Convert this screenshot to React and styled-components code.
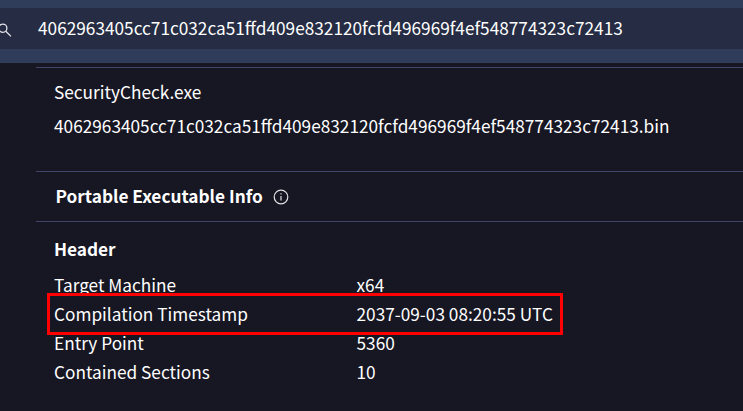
import React from 'react';
import styled, { createGlobalStyle } from 'styled-components';

const GlobalStyle = createGlobalStyle`
  * { box-sizing: border-box; }
  body {
    margin: 0;
    overflow: hidden;
    background: #171623;
    color: #fff;
    font-family: "Noto Sans CJK SC", "Noto Sans", sans-serif;
    font-size: 17.24px;
    line-height: 29px;
  }
`;

const Page = styled.main`
  height: 411px;
  overflow: hidden;
  white-space: nowrap;
`;

const TopBar = styled.header`
  height: 63px;
  padding: 8px 0 14px;
  background: #2f3d5b;
`;

const SearchField = styled.div`
  display: flex;
  align-items: center;
  height: 41px;
  padding-bottom: 2px;
  background: #252c43;
`;

const SearchIcon = styled.svg`
  flex: none;
  width: 16px;
  height: 16px;
  margin: 5px 26px 0 -4px;
`;

const Content = styled.div`
  margin-left: 36px;
  padding-top: 4px;
`;

const Names = styled.section`
  height: 104px;
  padding: 9px 0 0 18px;
  border-top: 1px solid #40466a;
`;

const Name = styled.div`
  margin-bottom: 5px;
`;

const SectionTitle = styled.h2`
  display: flex;
  align-items: center;
  height: 51px;
  margin: 0;
  padding: 0 0 2px 19.5px;
  border: solid #40466a;
  border-width: 1px 0;
  font-size: inherit;
  font-weight: 700;
`;

const InfoIcon = styled.svg`
  flex: none;
  width: 16px;
  height: 16px;
  margin: 2px 0 0 10.5px;
`;

const Details = styled.section`
  padding: 12px 0 0 18px;
`;

const Subtitle = styled.h3`
  margin: 0 0 7px;
  font-size: inherit;
  font-weight: 700;
`;

const Row = styled.div`
  position: relative;
  display: grid;
  grid-template-columns: 302.5px 1fr;
`;

const Highlight = styled.div`
  position: absolute;
  top: -6px;
  left: -7px;
  width: 516px;
  height: 42px;
  border: 3px solid #fe0000;
`;

const HASH = '4062963405cc71c032ca51ffd409e832120fcfd496969f4ef548774323c72413';

const rows = [
  { label: 'Target Machine', value: 'x64' },
  { label: 'Compilation Timestamp', value: '2037-09-03 08:20:55 UTC', marked: true },
  { label: 'Entry Point', value: '5360' },
  { label: 'Contained Sections', value: '10' },
];

export default function App() {
  return (
    <Page>
      <GlobalStyle />
      <TopBar>
        <SearchField>
          <SearchIcon viewBox="0 0 16 16" fill="none" stroke="#e4e6ea" strokeWidth="1.3">
            <circle cx="6.8" cy="6.2" r="4.1" />
            <path d="M9.8 9.2 15 14.4" />
          </SearchIcon>
          <span>{HASH}</span>
        </SearchField>
      </TopBar>
      <Content>
        <Names>
          <Name>SecurityCheck.exe</Name>
          <Name>{HASH}.bin</Name>
        </Names>
        <SectionTitle>
          <span>Portable Executable Info</span>
          <InfoIcon viewBox="0 0 16 16" fill="none" stroke="#e2e2e6" strokeWidth="1.2">
            <circle cx="8" cy="8" r="6.8" />
            <path d="M8 7v4.5M8 4.3v1.3" />
          </InfoIcon>
        </SectionTitle>
        <Details>
          <Subtitle>Header</Subtitle>
          {rows.map((r) => (
            <Row key={r.label}>
              <span>{r.label}</span>
              <span>{r.value}</span>
              {r.marked && <Highlight />}
            </Row>
          ))}
        </Details>
      </Content>
    </Page>
  );
}
